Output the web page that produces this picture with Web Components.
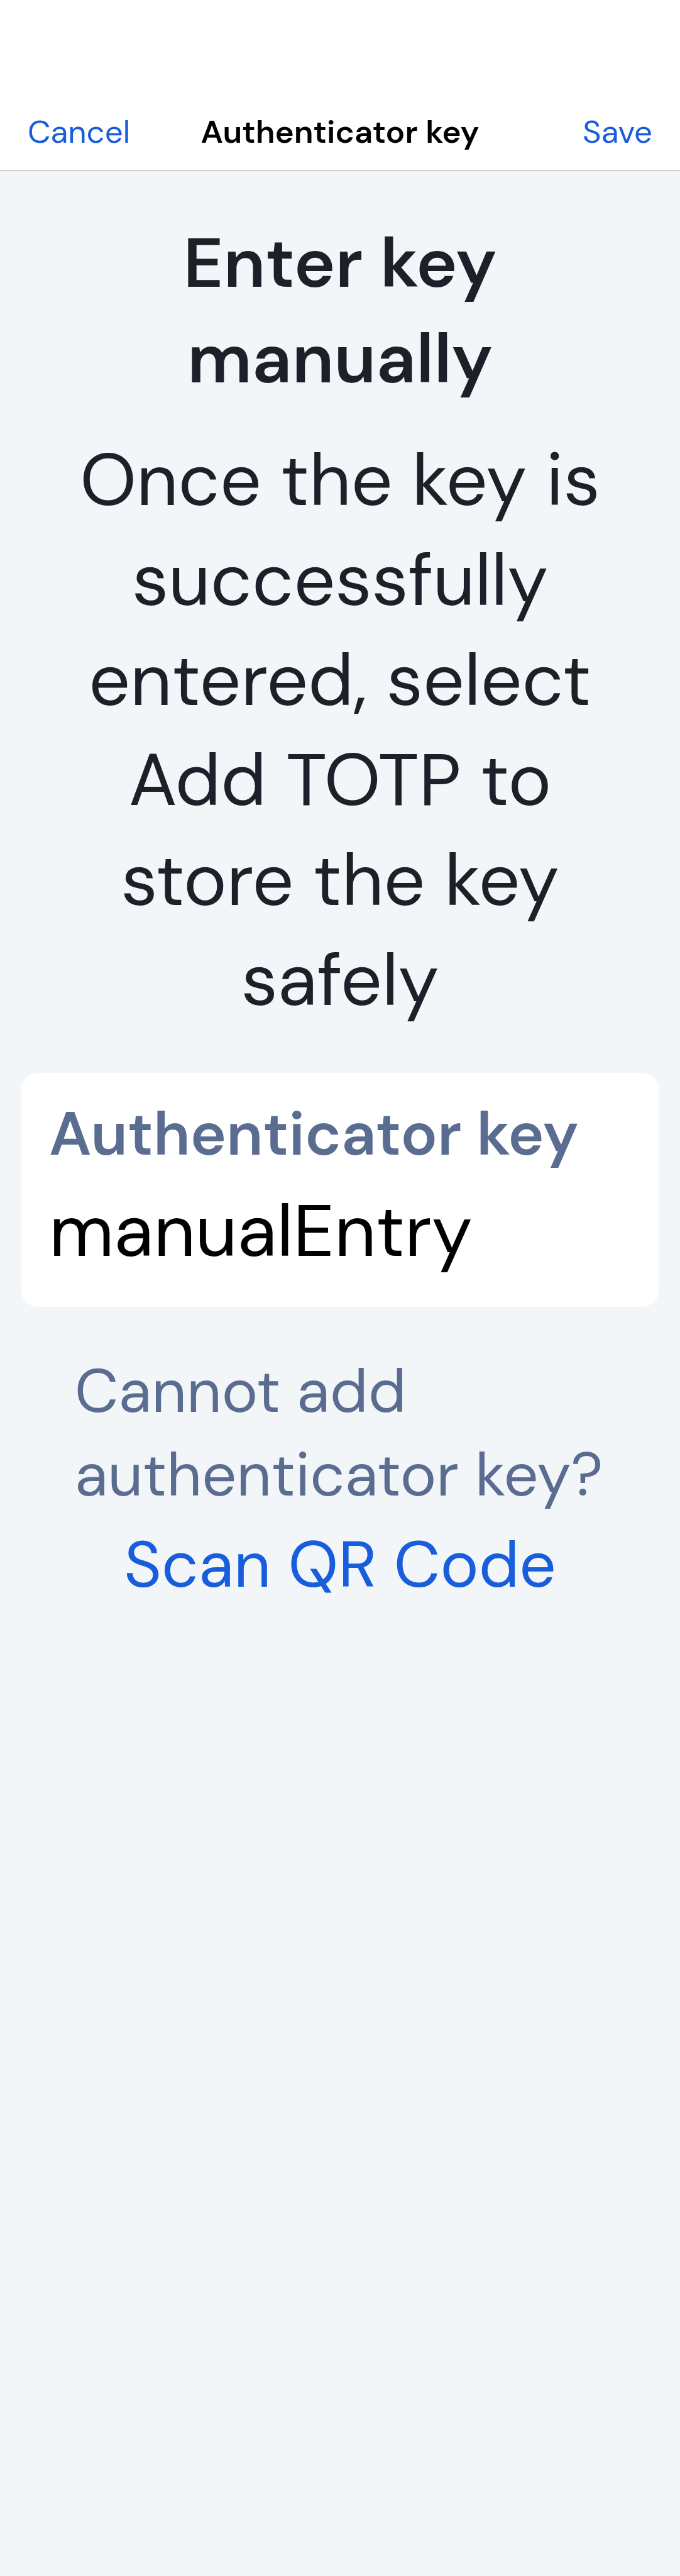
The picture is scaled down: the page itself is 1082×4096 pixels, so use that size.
<!DOCTYPE html>
<html lang="en">
<head>
<meta charset="utf-8">
<meta name="viewport" content="width=device-width, initial-scale=1">
<title>Authenticator key</title>
<style>
html, body { margin: 0; min-height: 100%; background: #f3f6f9; }
body {
  --primary: #175ddc;
  --text: #1b2029;
  --muted: #5a6d91;
  font-family: "DM Sans", Inter, "Open Sans", sans-serif;
  color: var(--text);
}
</style>
</head>
<body>
<key-entry-page></key-entry-page>

<script>
const define = (name, html, ready) => {
  const template = document.createElement('template');
  template.innerHTML = html;
  customElements.define(name, class extends HTMLElement {
    constructor() {
      super();
      this.attachShadow({ mode: 'open' }).append(template.content.cloneNode(true));
    }
    connectedCallback() { if (ready) ready(this, this.shadowRoot); }
  });
};

define('text-button', `
<style>
:host { display: block; }
button {
  display: block; margin: 0; padding: 0; border: 0; background: none;
  font: inherit; color: var(--primary); cursor: pointer;
}
</style>
<button type="button"><slot></slot></button>`);

define('nav-bar', `
<style>
:host { display: block; padding-top: 148px; background: #fff; border-bottom: 1px solid #adadad; }
header {
  display: grid; grid-template-columns: 1fr auto 1fr; align-items: center;
  height: 123px; padding: 0 44px; font-size: 51px; line-height: 66px;
}
h1 { margin: 0; font: inherit; font-weight: 600; color: #000; }
slot[name=end] { display: flex; justify-content: flex-end; }
</style>
<header>
  <slot name="start"></slot>
  <h1><slot></slot></h1>
  <slot name="end"></slot>
</header>`);

define('page-intro', `
<style>
:host { display: flex; flex-direction: column; gap: 38px; padding: 0 111px; text-align: center; }
h2, p { margin: 0; }
h2 { font-size: 111px; line-height: 152px; font-weight: 600; }
p { font-size: 116px; line-height: 159px; }
</style>
<h2><slot name="title"></slot></h2>
<p><slot></slot></p>`);

define('form-field', `
<style>
:host { display: block; margin: 0 33px; }
div {
  display: flex; flex-direction: column; gap: 16px;
  padding: 34px 45px 44px; border-radius: 28px; background: #fff;
}
label { font-size: 97px; line-height: 126px; font-weight: 600; color: var(--muted); }
input {
  display: block; box-sizing: border-box; width: 100%; height: 152px;
  margin: 0; padding: 0; border: 0; outline: 0; background: none;
  font: inherit; font-size: 116px; line-height: 152px; color: #000;
}
</style>
<div>
  <label for="field"></label>
  <input id="field" type="text" autocomplete="off" spellcheck="false">
</div>`, (host, root) => {
  root.querySelector('label').textContent = host.getAttribute('label');
  root.querySelector('input').value = host.getAttribute('value');
});

define('help-section', `
<style>
:host { display: flex; flex-direction: column; gap: 9px; }
p { margin: 0; padding: 0 111px 0 119px; font-size: 97px; line-height: 133px; color: var(--muted); }
slot[name=action] { display: flex; justify-content: center; font-size: 103px; line-height: 134px; }
</style>
<p><slot></slot></p>
<slot name="action"></slot>`);

define('key-entry-page', `
<style>
:host { display: block; }
main { display: flex; flex-direction: column; gap: 68px; padding: 70px 0; }
</style>
<nav-bar>
  <text-button slot="start">Cancel</text-button>
  Authenticator key
  <text-button slot="end">Save</text-button>
</nav-bar>
<main>
  <page-intro>
    <span slot="title">Enter key manually</span>
    Once the key is successfully entered, select Add TOTP to store the key safely
  </page-intro>
  <form-field label="Authenticator key" value="manualEntry"></form-field>
  <help-section>
    Cannot add authenticator key?
    <text-button slot="action">Scan QR Code</text-button>
  </help-section>
</main>`);
</script>
</body>
</html>
